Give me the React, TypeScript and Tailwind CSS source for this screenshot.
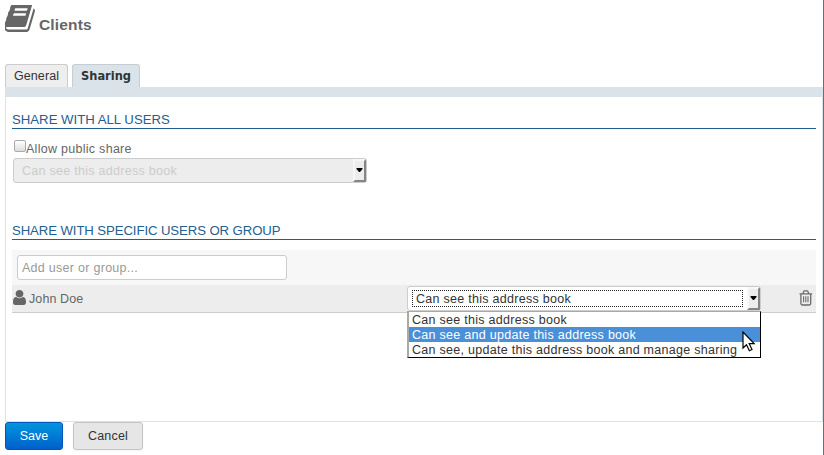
import React from "react";

const sans = "font-['Liberation_Sans',Arial,sans-serif]";

function BookIcon() {
  return (
    <svg className="h-[27px] w-[30px] shrink-0" viewBox="58 256 1610 1408" preserveAspectRatio="none" fill="#666">
      <path d="M1639 478q40 57 18 129l-275 906q-19 64-76.5 107.5t-122.5 43.5h-923q-77 0-148.5-53.5t-99.5-131.5q-24-67-2-127 0-4 3-27t4-37q1-8-3-21.5t-3-19.5q2-11 8-21t16.5-23.5 16.5-23.5q23-38 45-91.5t30-91.5q3-10 .5-30t-.5-28q3-11 17-28t17-23q21-36 42-92t25-90q1-9-2.5-32t.5-28q4-13 22-30.5t22-22.5q19-26 42.5-84.5t27.5-96.5q1-8-3-25.5t-2-26.5q2-8 9-18t18-23 17-21q8-12 16.5-30.5t15-35 16-36 19.5-32 26.5-23.5 36-11.5 47.5 5.5l-1 3q38-9 51-9h761q74 0 114 56t18 130l-274 906q-36 119-71.5 153.5t-128.5 34.5h-869q-27 0-38 15-11 16-1 43 24 70 144 70h923q29 0 56-15.5t35-41.5l300-987q7-22 5-57 38 15 59 43zm-1064 40q-4 13 2 22.5t20 9.5h608q13 0 25.5-9.5t16.5-22.5l21-64q4-13-2-22.5t-20-9.5h-608q-13 0-25.5 9.5t-16.5 22.5zm-83 270q-4 13 2 22.5t20 9.5h608q13 0 25.5-9.5t16.5-22.5l21-64q4-13-2-22.5t-20-9.5h-608q-13 0-25.5 9.5t-16.5 22.5z" />
    </svg>
  );
}

function UserIcon() {
  return (
    <svg className="h-[15px] w-[13px] shrink-0" viewBox="256 128 1280 1536" preserveAspectRatio="none" fill="#666">
      <path d="M1536 1399q0 109-62.5 187t-150.5 78h-854q-88 0-150.5-78t-62.5-187q0-85 8.5-160.5t31.5-152 58.5-131 94-89 134.5-34.5q131 128 313 128t313-128q76 0 134.5 34.5t94 89 58.5 131 31.5 152 8.5 160.5zm-256-887q0 159-112.5 271.5t-271.5 112.5-271.5-112.5-112.5-271.5 112.5-271.5 271.5-112.5 271.5 112.5 112.5 271.5z" />
    </svg>
  );
}

function TrashIcon() {
  return (
    <svg className="h-[16px] w-[14px] shrink-0" viewBox="0 0 14 16" fill="none" stroke="#6b6b6b" strokeWidth="1.3">
      <path d="M.5 3.8h12.6M3.9 3.6l.8-2.2q.2-.5.7-.5h2.8q.5 0 .7.5l.8 2.2M1.9 4v9.2q0 1.8 1.4 1.8h7q1.4 0 1.4-1.8V4" />
      <path d="M4.6 6.2v6M6.8 6.2v6M9 6.2v6" strokeWidth="1.1" />
    </svg>
  );
}

function DropButton() {
  return (
    <span className="flex h-full w-[13px] shrink-0 items-center justify-center border-2 border-t-[#f7f7f7] border-r-[#858585] border-b-[#858585] border-l-[#f7f7f7] bg-[#ededed]">
      <svg className="mb-[2px] h-[4px] w-[7px] shrink-0" viewBox="0 0 7 4">
        <path d="M.5 0h6v1L4 4H3L.5 1z" fill="#000" />
      </svg>
    </span>
  );
}

function Heading({ children }: { children: React.ReactNode }) {
  return (
    <h2 className="h-[18px] border-b border-[#1f6090] text-[13.2px] leading-[18px] text-[#1f6090]">{children}</h2>
  );
}

function App() {
  return (
    <div className={`${sans} flex h-[455px] w-[824px] overflow-hidden bg-white text-[12.5px] whitespace-nowrap text-[#666]`}>
      <main className="flex w-[823px] shrink-0 flex-col pl-[5px]">
        <header className="flex h-[64px] gap-[4px] pt-[5px]">
          <BookIcon />
          <h1 className="pt-[10px] text-[15.5px] leading-[19px] font-bold tracking-[0.15px]">Clients</h1>
        </header>
        <nav className="flex h-[23px] shrink-0 gap-1">
          <button className="w-[63px] rounded-t-[3px] border border-b-0 border-[#ccc] bg-[#eee] leading-[20px] text-[#333]">
            <span className="tracking-[0.1px]">General</span>
          </button>
          <button className="w-[68px] rounded-t-[3px] border border-b-0 border-[#c8cdd0] bg-[#dae3e9] font-['DejaVu_Sans_Condensed','DejaVu_Sans',sans-serif] text-[12.7px] leading-[20px] font-bold text-[#333]">
            Sharing
          </button>
        </nav>
        <div className="h-[10px] shrink-0 bg-[#dae3e9]" />
        <section className="h-[325px] w-[818px] shrink-0 border border-t-0 border-[#dae3e9] pr-[6px] pl-[6px]">
          <div className="pt-[14px]">
            <Heading>SHARE WITH ALL USERS</Heading>
          </div>
          <label className="flex h-[29px] pt-[11px] pl-[2px]">
            <span className="h-[12px] w-[12px] rounded-[2px] border border-[#aaa] bg-gradient-to-b from-white to-[#ddd]" />
            <span className="leading-[18px] tracking-[0.28px]">Allow public share</span>
          </label>
          <div className="ml-px flex h-[25px] w-[354px] rounded-[3px] border border-[#ccc] bg-[#ededed] pl-[8px]">
            <span className="grow leading-[24px] tracking-[0.28px] text-[#ccc]">Can see this address book</span>
            <DropButton />
          </div>
          <div className="pt-[39px]">
            <Heading>
              <span className="tracking-[-0.1px]">SHARE WITH SPECIFIC USERS OR GROUP</span>
            </Heading>
          </div>
          <div className="mt-[10px] h-[35px] bg-[#f7f7f7] px-[5px] pt-[5px]">
            <div className="h-[25px] w-[270px] rounded-[3px] border border-[#ccc] bg-white pl-[4px] leading-[24px] tracking-[0.28px] text-[#999]">
              Add user or group...
            </div>
          </div>
          <div className="flex h-[28px] border-b border-[#ccc] bg-[#ededed]">
            <div className="flex w-[395px] gap-[3px] pt-[5px] pl-px">
              <UserIcon />
              <span className="leading-[18px] tracking-[0.1px]">John Doe</span>
            </div>
            <div className="relative mt-px flex h-[25px] w-[354px] rounded-[3px] border border-[#ccc] bg-white pl-[4px] text-[#333]">
              <span className="my-[3px] mr-[4px] grow border border-dotted border-[#222] pl-[3px] leading-[16px] tracking-[0.28px]">
                Can see this address book
              </span>
              <DropButton />
              <ul className="absolute top-[24px] left-[-1px] z-10 h-[47px] w-[354px] border border-l-2 border-t-[#aaa] border-r-black border-b-black border-l-[#aaa] bg-white leading-[16px] tracking-[0.28px]">
                <li className="h-[15px] pl-[3px]">Can see this address book</li>
                <li className="h-[15px] bg-[#4a90d9] pl-[3px] text-white">Can see and update this address book</li>
                <li className="h-[15px] pl-[3px]">Can see, update this address book and manage sharing</li>
              </ul>
              <svg className="absolute top-[44px] left-[334px] z-20 h-[22px] w-[14px]" viewBox="0 0 14 22">
                <path d="M1 1v16l3.5-3.3 2.9 6.1 2.6-1.3-2.8-5.8h5z" fill="#fff" stroke="#000" strokeWidth="1.2" />
              </svg>
            </div>
            <div className="flex grow justify-end pt-[5px] pr-[3px]">
              <TrashIcon />
            </div>
          </div>
        </section>
        <footer className="flex h-[28px] gap-[10px]">
          <button className="w-[58px] rounded-[3px] border border-[#0055bb] bg-gradient-to-b from-[#0095dc] to-[#0060cc] leading-[27px] text-white">Save</button>
          <button className="w-[70px] rounded-[3px] border border-[#c4c4c4] bg-[#e6e6e6] leading-[27px] tracking-[0.2px] text-[#333] shadow-xs">Cancel</button>
        </footer>
      </main>
      <div className="w-px bg-[#6b6f72]" />
    </div>
  );
}

export default App;
